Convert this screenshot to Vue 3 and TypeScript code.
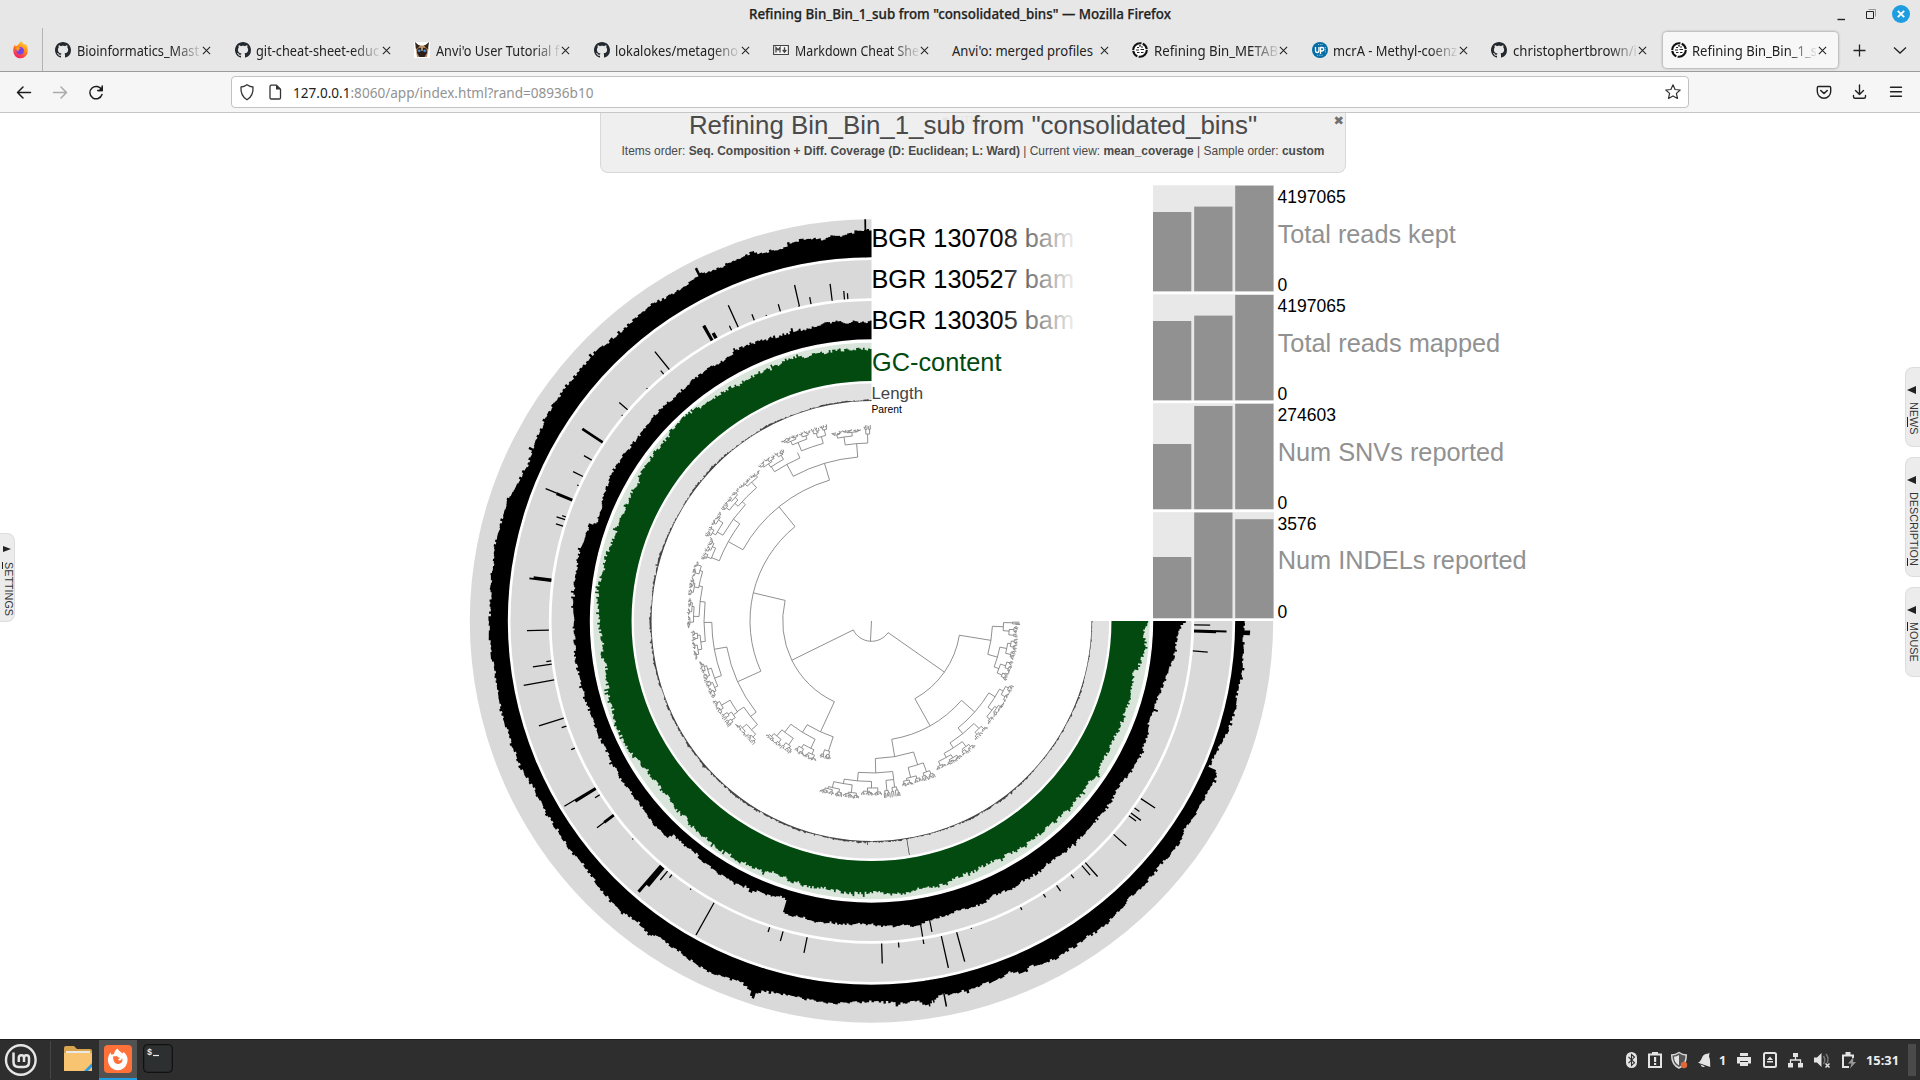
<script setup lang="ts">
interface Tab { icon: string; label: string; width: number; active?: boolean }
interface TreeNode { r: number; a: number; kids?: TreeNode[]; span?: [number, number, number] }
type Point = [number, number]

const tabs: Tab[] = [
  { icon: 'github', label: 'Bioinformatics_Mast', width: 122 },
  { icon: 'github', label: 'git-cheat-sheet-educ', width: 123 },
  { icon: 'cat', label: "Anvi'o User Tutorial f", width: 123 },
  { icon: 'github', label: 'lokalokes/metageno', width: 123 },
  { icon: 'markdown', label: 'Markdown Cheat She', width: 124 },
  { icon: '', label: "Anvi'o: merged profiles", width: 141 },
  { icon: 'anvio', label: 'Refining Bin_METAB', width: 124 },
  { icon: 'uniprot', label: 'mcrA - Methyl-coenz', width: 124 },
  { icon: 'github', label: 'christophertbrown/i', width: 124 },
  { icon: 'anvio', label: 'Refining Bin_Bin_1_s', width: 125, active: true },
]

const CX = 871.5
const CY = 621

let seed = 20417
function rand(): number {
  seed = (seed + 0x6d2b79f5) | 0
  let t = Math.imul(seed ^ (seed >>> 15), 1 | seed)
  t = (t + Math.imul(t ^ (t >>> 7), 61 | t)) ^ t
  return ((t ^ (t >>> 14)) >>> 0) / 4294967296
}

function pt(r: number, deg: number): string {
  const t = (deg * Math.PI) / 180
  return `${(CX + r * Math.cos(t)).toFixed(2)} ${(CY + r * Math.sin(t)).toFixed(2)}`
}

function ring(r0: number, r1: number): string {
  return `M${pt(r0, 0)}L${pt(r1, 0)}A${r1} ${r1} 0 1 1 ${pt(r1, 270)}L${pt(r0, 270)}A${r0} ${r0} 0 1 0 ${pt(r0, 0)}Z`
}

function heightAt(points: Point[], a: number): number {
  for (let i = 1; i < points.length; i++) {
    if (a <= points[i][0]) {
      const [a0, h0] = points[i - 1]
      const [a1, h1] = points[i]
      return h0 + ((h1 - h0) * (a - a0)) / Math.max(0.001, a1 - a0)
    }
  }
  return points[points.length - 1][1]
}

function profile(r0: number, points: Point[], jitter: number, max = 38): string {
  const step = 0.36
  let drift = 0
  let d = `M${pt(r0, 0)}`
  for (let a = 0; a < 270; a += step) {
    drift = drift * 0.86 + (rand() - 0.5) * jitter * 0.7
    const spike = rand() > 0.93 ? jitter * 1.2 * rand() : 0
    const h = Math.min(max, Math.max(0.6, heightAt(points, a + step / 2) + drift + (rand() - 0.5) * jitter * 1.1 + spike))
    d += `L${pt(r0 + h, a)}L${pt(r0 + h, Math.min(270, a + step))}`
  }
  return `${d}L${pt(r0, 270)}A${r0} ${r0} 0 1 0 ${pt(r0, 0)}Z`
}

function spikes(r0: number, list: number[][]): string {
  return list.map(([a, h, w = 0.22]) =>
    `M${pt(r0, a - w / 2)}L${pt(r0 + h, a - w / 2)}L${pt(r0 + h, a + w / 2)}L${pt(r0, a + w / 2)}Z`).join('')
}

const outerPoints: Point[] = [
  [0, 9], [1.3, 9], [1.5, 14], [2.1, 14], [2.3, 8], [6, 10], [13, 11], [17, 8], [22, 5], [23.3, 6], [23.8, 16], [26.5, 14], [32.4, 13.5], [41, 15],
  [50, 18], [58, 19], [61.8, 21], [65, 17], [67, 20], [68, 15], [71.8, 16], [79, 16], [80, 18], [81.8, 24], [83, 19], [86.7, 18.5], [91.7, 17.5],
  [95, 20], [101.8, 20], [106, 20], [107, 25], [107.5, 30], [108.2, 23], [110, 18], [116.8, 23.5], [123.8, 16], [125, 21], [128, 17], [132.8, 20],
  [140, 12], [142, 15], [148, 14], [155, 14], [160.7, 17], [167, 15.5], [174, 17], [180, 17], [189, 19.5], [195, 20.5], [199, 17.5], [204.6, 15],
  [213, 21], [221.3, 21], [227, 19.5], [234.4, 21], [240, 19], [243.2, 21], [243.6, 30], [244, 23], [246, 21], [249.6, 22], [257, 19], [257.4, 23],
  [263.5, 22], [266, 23], [268, 27], [270, 28],
]
const midPoints: Point[] = [
  [0, 32], [0.5, 30], [0.8, 27], [4.8, 23], [12, 17], [17, 15], [17.5, 18], [18, 12], [20, 12], [24, 18], [27.5, 19], [33.7, 17], [39.9, 19],
  [46.8, 18], [55.4, 20], [60.5, 20], [66.7, 18], [68.4, 22], [76.3, 22], [81, 26], [86, 23], [92, 22], [95.4, 22], [101, 23], [106.9, 23],
  [107, 9], [116.5, 13], [126, 11], [132.8, 10], [133.5, 16], [141, 15], [149.4, 14], [158.4, 13], [164.6, 15], [172.5, 16], [180, 15],
  [191.8, 17], [199, 17], [199.6, 10], [205.5, 15], [210, 16], [217.5, 15.5], [226, 16.5], [234.4, 18], [242.8, 18], [243, 24], [244, 19],
  [247, 20], [256.8, 18], [262, 19], [269, 16.5], [270, 20],
]
const gcPoints: Point[] = [
  [0, 37], [0.5, 36], [0.7, 32], [5.4, 33], [10.3, 33], [11, 28], [18.5, 30], [24.6, 29], [30, 31], [35.6, 33], [41, 32], [44.8, 32.5],
  [49.8, 31], [56, 32], [63, 29.5], [71, 30.5], [76, 34], [78, 31], [85, 33], [92, 33], [97, 34], [103, 32.5], [111.8, 32], [118.8, 33],
  [128, 33], [136.8, 31], [143.5, 28], [151, 34], [158, 34.5], [166, 32.5], [174.5, 30], [186, 34], [193, 34.5], [200, 31.5], [206.5, 31],
  [216.8, 34], [227.5, 36], [236.5, 33], [242, 30], [248.2, 29.5], [248.5, 34], [256, 33], [264, 33], [269, 31], [270, 32],
]
const lengthPoints: Point[] = [[0, 1], [80, 1], [92, 1.4], [170, 1.2], [190, 1.5], [220, 1.2], [270, 1.2]]

const outerPath = profile(363.7, outerPoints, 2.2)
const midPath = profile(281.7, midPoints, 2)
const gcPath = profile(240, gcPoints, 2.8)
const lengthPath = profile(220, lengthPoints, 1, 4)
const outerSpikes = spikes(363.7, [[269.1, 38, 0.25], [81.4, 26], [80.7, 23], [79, 29]])
const midSpikes = spikes(281.7, [[80.8, 38], [79, 35]])
const lengthSpikes = spikes(220, [[80.8, 17, 0.18], [91, 4], [60, 2]])
const thinSpikes = spikes(322.7, [
  [0.7, 16], [1.7, 32.5, 0.35], [1.9, 22, 0.3], [5.3, 15], [33.4, 17], [35.4, 6], [36.5, 12.5], [37.1, 9], [41.4, 17], [48.5, 18.5], [49.3, 12.5],
  [51.8, 4.5], [55, 7], [57.8, 4], [62.5, 3], [72, 1], [74.7, 30.5], [77.5, 32.5], [80.8, 4.5], [85.2, 5], [88.2, 20], [101.5, 16], [105.9, 10],
  [108.4, 5], [119.2, 37], [124, 1.5], [128.2, 4], [129.2, 11.5], [130.7, 34.5, 0.5], [130.3, 24, 0.8], [137.6, 1.2], [143, 21], [143, 12, 0.5],
  [147.4, 5.5], [148.9, 36], [148.7, 24, 0.5], [156.8, 4], [161, 5], [162.5, 26], [169.5, 31], [172.3, 19], [172.9, 5], [178.4, 22],
  [187.1, 22, 0.3], [187.3, 18, 0.5], [197.1, 7.5], [198.3, 9], [198.8, 4], [202.1, 29], [202, 17, 0.5], [204.8, 1.5], [206.6, 11], [209.9, 9],
  [213.6, 24.5, 0.45], [219.5, 1], [220.9, 11], [226, 1], [229.9, 4.5], [231.2, 23], [240.4, 17, 0.55], [241.2, 6, 0.6], [244.3, 5], [245.6, 24],
  [248.7, 6.5], [251, 1], [253.6, 7.5], [257, 1], [257.1, 22], [259.2, 7], [263, 17], [265.2, 8.5], [265.8, 6],
])

const tree: TreeNode = {
  r: 20.3, a: 91, kids: [
    { r: 89, a: 35, kids: [
      { r: 121, a: 9.2, kids: [
        { r: 132, a: 2.5, kids: [{ r: 141, a: 0.7, span: [0.2, 1.6, 148] }, { r: 138, a: 4.2, span: [2, 6.5, 146] }] },
        { r: 131, a: 16, kids: [{ r: 138, a: 11.5, span: [7, 15.5, 147] }, { r: 136, a: 20.5, span: [16, 24, 147] }] },
      ] },
      { r: 120, a: 60.8, kids: [
        { r: 137.6, a: 41.4, kids: [
          { r: 145, a: 31.5, span: [24.5, 41.5, 156] },
          { r: 145, a: 51, kids: [{ r: 152, a: 45, span: [42.5, 49, 158] }, { r: 151, a: 57.2, span: [50, 66.5, 163] }] },
        ] },
        { r: 137.6, a: 80.3, kids: [
          { r: 151, a: 72.2, span: [67.5, 79.5, 168] },
          { r: 152, a: 88.4, kids: [
            { r: 160, a: 82, span: [80.5, 86, 177] },
            { r: 160.5, a: 95, kids: [{ r: 167, a: 90, span: [86.5, 93.5, 174] }, { r: 165, a: 99.8, span: [94, 107, 178] }] },
          ] },
        ] },
      ] },
    ] },
    { r: 88.8, a: 153.8, kids: [
      { r: 122, a: 114.7, kids: [
        { r: 137, a: 108.3, span: [106.5, 111, 145] },
        { r: 131, a: 121.8, kids: [{ r: 141, a: 115.5, span: [111.5, 121, 151] }, { r: 141, a: 128, span: [121.5, 133, 156] }] },
      ] },
      { r: 121.5, a: 193.4, kids: [
        { r: 147, a: 155.6, kids: [
          { r: 154, a: 141.7, kids: [{ r: 162, a: 137.8, span: [133.5, 143, 171] }, { r: 162, a: 146, span: [143.5, 153.3, 178] }] },
          { r: 159.7, a: 169.8, kids: [
            { r: 167, a: 160, span: [154, 167, 177] },
            { r: 167.5, a: 179.5, kids: [
              { r: 172, a: 173, span: [167.5, 177, 180] },
              { r: 172.5, a: 186.5, kids: [{ r: 178, a: 181.5, span: [177.5, 187.5, 184] }, { r: 176, a: 191.5, span: [188, 199, 185] }] },
            ] },
          ] },
        ] },
        { r: 147, a: 231, kids: [
          { r: 163.7, a: 209, kids: [
            { r: 172, a: 201.6, span: [200, 207.5, 181] },
            { r: 171.6, a: 216.4, kids: [{ r: 178, a: 210, span: [207, 216, 187] }, { r: 176, a: 222.7, span: [216.5, 233.5, 188] }] },
          ] },
          { r: 164.5, a: 253.4, kids: [
            { r: 178, a: 241.6, kids: [{ r: 184, a: 237, span: [233.7, 243, 193] }, { r: 184, a: 246.3, span: [243, 257.3, 201] }] },
            { r: 178, a: 265.2, kids: [{ r: 186, a: 261.5, span: [257.8, 267, 192] }, { r: 187, a: 268.8, span: [267.6, 269.9, 195] }] },
          ] },
        ] },
      ] },
    ] },
  ],
}

const LEAF = 0.72
function grow(r: number, from: number, to: number, leafR: number, out: string[]): void {
  const width = to - from
  const cut = from + width * (0.34 + rand() * 0.32)
  const lo = (from + cut) / 2
  const hi = (cut + to) / 2
  out.push(`M${pt(r, lo)}A${r} ${r} 0 0 1 ${pt(r, hi)}`)
  for (const [f, t, m] of [[from, cut, lo], [cut, to, hi]]) {
    const leaf = t - f < LEAF
    const next = leaf ? leafR - 1 + rand() * 2 : r + (leafR - r) * (0.3 + rand() * 0.35)
    out.push(`M${pt(r, m)}L${pt(next, m)}`)
    if (!leaf) grow(Number(next.toFixed(2)), f, t, leafR, out)
  }
}

function draw(node: TreeNode, out: string[]): void {
  if (node.span) {
    grow(node.r, node.span[0], node.span[1], node.span[2], out)
    return
  }
  const kids = node.kids ?? []
  const angles = kids.map((k) => k.a)
  out.push(`M${pt(node.r, Math.min(...angles))}A${node.r} ${node.r} 0 0 1 ${pt(node.r, Math.max(...angles))}`)
  for (const kid of kids) {
    out.push(`M${pt(node.r, kid.a)}L${pt(kid.r, kid.a)}`)
    draw(kid, out)
  }
}

const branches: string[] = [`M${CX} ${CY}L${pt(20.3, 93)}`]
draw(tree, branches)
const treePath = branches.join('')

const backgrounds = [
  { d: ring(220, 237.6), fill: '#e1e1e1' },
  { d: ring(240, 278.3), fill: '#d9e5db' },
  { d: ring(281.7, 320), fill: '#d9d9d9' },
  { d: ring(322.7, 361), fill: '#d9d9d9' },
  { d: ring(363.7, 401.7), fill: '#d9d9d9' },
]

const samples = [
  { y: 185.3, label: 'Total reads kept', max: '4197065', tops: [212, 206.6, 185.6], ty: 242.7, w: 178 },
  { y: 294.3, label: 'Total reads mapped', max: '4197065', tops: [321, 315.6, 294.9], ty: 351.7, w: 222.5 },
  { y: 403.2, label: 'Num SNVs reported', max: '274603', tops: [444, 406, 403.8], ty: 460.7, w: 226.5 },
  { y: 512.2, label: 'Num INDELs reported', max: '3576', tops: [557, 512.5, 519.2], ty: 569, w: 249 },
]
const barX = [1153, 1194.2, 1235.2]
const bamRows = [
  { y: 246.7, text: 'BGR 130708 bam' },
  { y: 288, text: 'BGR 130527 bam' },
  { y: 328.7, text: 'BGR 130305 bam' },
]
const drawers = [
  { cls: 'news', pre: 'NE', key: 'W', post: 'S' },
  { cls: 'description', pre: 'DESCRIPTIO', key: 'N', post: '' },
  { cls: 'mouse', pre: '', key: 'M', post: 'OUSE' },
]
</script>

<template>
  <div class="screen">
    <header class="titlebar">
      <svg class="title-text" width="424" height="28"><text x="1" y="19" textLength="422" lengthAdjust="spacingAndGlyphs">Refining Bin_Bin_1_sub from "consolidated_bins" — Mozilla Firefox</text></svg>
      <svg class="window-buttons" width="90" height="28" viewBox="1830 0 90 28">
        <path d="M1837.500 19.500h7.500" stroke="#222" stroke-width="1.400" />
        <path d="M1866.500 11.500h7v7h-7z" fill="none" stroke="#222" /><path d="M1868.500 9.500h7v7" fill="none" stroke="#999" />
        <circle cx="1901" cy="14" r="9" fill="#1e9ee0" /><path d="M1897.800 10.800l6.400 6.400m0-6.400l-6.400 6.400" stroke="#fff" stroke-width="1.800" />
      </svg>
    </header>

    <nav class="tabstrip">
      <div class="pinned">
        <svg width="17" height="18" viewBox="0 0 18 20">
          <defs><linearGradient id="fx" x1=".8" y1="0" x2=".3" y2="1"><stop offset="0" stop-color="#ffe14a" /><stop offset=".45" stop-color="#ff8a16" /><stop offset="1" stop-color="#f5156c" /></linearGradient></defs>
          <path d="M10.500 0c.3 2 2 3 3 4l1-1c2 2 3 5 2.500 8a8 8 0 0 1-16 .5C.8 8 1.600 5.500 3 4l.3 2L6 4.700C7 3 8.500 1 10.500 0z" fill="url(#fx)" />
          <circle cx="8.600" cy="10.800" r="4.100" fill="#7542e5" /><path d="M4 7l3-.6 2 1.700-2 1.500-.4 2C5 11.500 4 9 4 7z" fill="#ff9a1c" />
        </svg>
      </div>
      <div v-for="(tab, i) in tabs" :key="i" class="tab" :class="{ active: tab.active, plain: !tab.icon }">
        <svg v-if="tab.icon === 'github'" class="favicon" viewBox="0 0 16 16"><path fill="#24292f" d="M8 0C3.580 0 0 3.580 0 8c0 3.540 2.290 6.530 5.470 7.590.4.070.55-.17.55-.38 0-.19-.01-.82-.01-1.490-2.010.37-2.530-.49-2.690-.94-.09-.23-.48-.94-.82-1.130-.28-.15-.68-.52-.01-.53.63-.01 1.080.58 1.230.82.720 1.210 1.870.87 2.330.66.070-.52.28-.87.51-1.070-1.780-.2-3.640-.89-3.640-3.950 0-.87.31-1.590.82-2.150-.08-.2-.36-1.020.08-2.120 0 0 .67-.21 2.200.82.640-.18 1.320-.27 2-.27s1.360.09 2 .27c1.530-1.040 2.200-.82 2.200-.82.440 1.100.16 1.920.08 2.120.51.560.82 1.270.82 2.150 0 3.070-1.870 3.750-3.650 3.950.29.250.54.730.54 1.480 0 1.070-.01 1.930-.01 2.200 0 .21.15.46.55.38A8.010 8.010 0 0 0 16 8c0-4.420-3.580-8-8-8z" /></svg>
        <svg v-else-if="tab.icon === 'cat'" class="favicon" viewBox="0 0 16 16"><path fill="#fff" d="M0 0h16v16H0z" /><path fill="#b98d62" d="M1.500 4.500L3 3.500h10l1.500 3L13 15H3z" /><path fill="#33261f" d="M1 0l3.500 3H6L4.500 5.500 2 7zM15 0l-3.500 3H10l1.500 2.500L14 7z" /><path fill="#2b201c" d="M3.500 6.500L8 5.500l4.500 1L13 11l-2.500 4h-5L3 11z" /><path fill="#c9a078" d="M7 5h2l-.3 4H7.300z" /><circle cx="5.300" cy="8.800" r="1.300" fill="#3b97e4" /><circle cx="10.700" cy="8.800" r="1.300" fill="#3b97e4" /></svg>
        <svg v-else-if="tab.icon === 'markdown'" class="favicon" viewBox="0 0 16 16"><path d="M.6 3.500h14.800v9H.6z" fill="#f4f4f4" stroke="#444" stroke-width="1.100" /><path d="M3 10.500v-5l2 2.500 2-2.500v5M11.500 5.300v4.500M9.700 8l1.800 2.200L13.300 8" fill="none" stroke="#444" stroke-width="1.300" /></svg>
        <svg v-else-if="tab.icon === 'anvio'" class="favicon" viewBox="0 0 16 16"><circle cx="8" cy="8" r="6.800" fill="#fff" stroke="#111" stroke-width="2.100" stroke-dasharray="12 1.300 7 1" /><path d="M5 5.500h2M9 5h2M4 8h3M8.500 7.500H12M5 10.500h2.500M9 10.500h2.500M7 3.800h2" stroke="#222" stroke-width="1.200" /></svg>
        <svg v-else-if="tab.icon === 'uniprot'" class="favicon" viewBox="0 0 16 16"><circle cx="8" cy="8" r="8" fill="#056da5" /><path d="M3.500 5v3.500q0 2 1.700 2t1.700-2V5M8.500 12V5.500H10q1.800 0 1.800 1.700T10 9H8.500" fill="none" stroke="#fff" stroke-width="1.300" /><path d="M13.300 5v6M5 13.200h6M6 2.500h5" stroke="#9cc9e4" stroke-width="1.100" stroke-dasharray="1.200 1" /></svg>
        <svg class="tab-label" :class="{ full: !tab.icon }" height="24"><text x="0" y="17.500" :textLength="tab.width" lengthAdjust="spacingAndGlyphs">{{ tab.label }}</text></svg>
        <svg class="tab-close" viewBox="0 0 10 10"><path d="M1 1l8 8M9 1L1 9" stroke="#222" stroke-width="1.150" /></svg>
      </div>
      <svg class="tab-tools" width="80" height="43" viewBox="1840 28 80 43"><path d="M1859.500 44.500v12M1853.500 50.500h12M1894 47.500l6 5.500 6-5.500" fill="none" stroke="#222" stroke-width="1.300" /></svg>
    </nav>

    <div class="toolbar">
      <svg class="nav-icons" width="231" height="40" viewBox="0 72 231 40">
        <g fill="none" stroke-width="1.500" stroke-linecap="round" stroke-linejoin="round">
          <path d="M30.500 92.500h-13m5.500-5.500l-5.500 5.500 5.500 5.500" stroke="#1c1c1c" /><path d="M53.500 92.500h13M61 87l5.500 5.500L61 98" stroke="#aaa" />
          <path d="M101.700 90a6.200 6.200 0 1 0 .3 4.500M102.200 86v4.500h-4.500" stroke="#1c1c1c" />
        </g><path d="M102.900 86v5.200h-5.200z" fill="#1c1c1c" />
      </svg>
      <div class="urlbar">
        <svg class="site-icons" width="50" height="30" viewBox="236 77 50 30"><g fill="none" stroke="#333" stroke-width="1.300" stroke-linejoin="round"><path d="M247 84.700q3 2.300 6 2.300c.5 6-1.500 10-6 12.800-4.500-2.800-6.500-6.800-6-12.800q3 0 6-2.300z" /><path d="M270 86.500q0-1.300 1.300-1.300h5.200l4 4v8.500q0 1.300-1.300 1.300h-7.900q-1.300 0-1.300-1.300z" /></g><path d="M276 85v4.600h4.600z" fill="#333" /></svg>
        <svg class="url-text" width="320" height="30"><text x="7" y="21" textLength="300.500" lengthAdjust="spacingAndGlyphs"><tspan fill="#222">127.0.0.1</tspan><tspan fill="#929292">:8060/app/index.html?rand=08936b10</tspan></text></svg>
        <svg class="star" width="18" height="18" viewBox="0 0 18 18"><path d="M9 1.800l2.100 4.700 5.100.5-3.800 3.400 1.100 5.100L9 12.900l-4.500 2.600 1.100-5.100L1.800 7l5.100-.5z" fill="none" stroke="#333" stroke-width="1.200" stroke-linejoin="round" /></svg>
      </div>
      <svg class="tool-icons" width="120" height="40" viewBox="1800 72 120 40">
        <g fill="none" stroke="#222" stroke-width="1.400" stroke-linecap="round" stroke-linejoin="round">
          <path d="M1818.500 86.500h11q1.200 0 1.200 1.200v3.800a6.700 6.700 0 0 1-13.400 0v-3.800q0-1.200 1.200-1.200z" /><path d="M1820.800 90.500l3.200 3 3.200-3" stroke-width="1.600" />
          <path d="M1859.500 85v9.500m-4-4l4 4 4-4M1853.500 95.500v1.200q0 1.500 1.500 1.500h9q1.500 0 1.500-1.500v-1.200M1890.500 87.300h11M1890.500 91.700h11M1890.500 96.200h11" />
        </g>
      </svg>
    </div>

    <main class="page">
      <svg class="chart" width="1920" height="926" viewBox="0 113 1920 926">
        <defs>
          <linearGradient id="fade" gradientUnits="userSpaceOnUse" x1="998" y1="0" x2="1080" y2="0"><stop offset="0" stop-color="#000" /><stop offset=".3" stop-color="#606060" /><stop offset="1" stop-color="#fff" /></linearGradient>
        </defs>
        <path v-for="(b, i) in backgrounds" :key="i" :d="b.d" :fill="b.fill" />
        <path :d="outerPath" /><path :d="outerSpikes" /><path :d="thinSpikes" /><path :d="midPath" /><path :d="midSpikes" />
        <path :d="gcPath" fill="#024a10" />
        <path :d="lengthPath" fill="#444" /><path :d="lengthSpikes" fill="#444" />
        <path :d="treePath" fill="none" stroke="#7c7c7c" stroke-width=".85" />
        <g class="layer-names">
          <text v-for="row in bamRows" :key="row.y" x="871.500" :y="row.y" textLength="202.500" lengthAdjust="spacingAndGlyphs" font-size="25.200" fill="url(#fade)">{{ row.text }}</text>
          <text x="872" y="370.500" textLength="129.500" lengthAdjust="spacingAndGlyphs" font-size="25.200" fill="#024a10">GC-content</text>
          <text x="871.500" y="399" font-size="16.500" fill="#444" textLength="51.500" lengthAdjust="spacingAndGlyphs">Length</text>
          <text x="871.500" y="412.500" font-size="10.300">Parent</text>
        </g>
        <g v-for="s in samples" :key="s.label">
          <rect x="1153" :y="s.y" width="121" height="106.300" fill="#e8e8e8" />
          <rect v-for="(top, i) in s.tops" :key="i" :x="barX[i]" :y="top" width="38.300" :height="s.y + 106 - top" fill="#919191" />
          <text x="1277.500" :y="s.y + 17.500" font-size="17.500">{{ s.max }}</text>
          <text x="1277.700" :y="s.ty" font-size="25" fill="#919191" :textLength="s.w" lengthAdjust="spacingAndGlyphs">{{ s.label }}</text>
          <text x="1277.500" :y="s.y + 105.500" font-size="17.500">0</text>
        </g>
      </svg>

      <section class="panel">
        <span class="ghost">▼ TITLE</span>
        <h1>Refining Bin_Bin_1_sub from "consolidated_bins"</h1>
        <p>Items order: <b>Seq. Composition + Diff. Coverage (D: Euclidean; L: Ward)</b> | Current view: <b>mean_coverage</b> | Sample order: <b>custom</b></p>
        <span class="panel-close">✖</span>
      </section>

      <aside class="drawer settings"><i class="arrow right"></i><span><u>S</u>ETTINGS</span></aside>
      <aside v-for="d in drawers" :key="d.cls" class="drawer" :class="d.cls"><i class="arrow left"></i><span>{{ d.pre }}<u>{{ d.key }}</u>{{ d.post }}</span></aside>
    </main>

    <footer class="taskbar">
      <svg width="200" height="41" viewBox="0 1039 200 41">
        <circle cx="20.800" cy="1060" r="14.800" fill="none" stroke="#e6e6e6" stroke-width="2.400" />
        <path d="M13.500 1052.500v9.500q0 5 5 5h5.500q5 0 5-5v-4q0-2.700-2.500-2.700t-2.500 2.700v4m0-4q0-2.700-2.600-2.700t-2.600 2.700v4" fill="none" stroke="#e6e6e6" stroke-width="2.500" />
        <path d="M50.500 1041v38" stroke="#454545" />
        <path d="M64 1048q0-2 2-2h8l3 3h13q2 0 2 2v7H64z" fill="#d9a54c" /><path d="M66 1051h24v5H66z" fill="#e9e9e9" /><path d="M64 1053h28v18H64z" fill="#f8c471" /><path d="M92 1063v4l-4 4h-4z" fill="#2a9be0" />
        <path d="M99 1040h38v40H99z" fill="#525252" /><path d="M99 1078h38v2H99z" fill="#1e9ee0" />
        <rect x="104" y="1045" width="28" height="28" rx="4" fill="#ff7139" />
        <path d="M117.500 1048.500c1 2.500 3.500 3 4.800 5l1.200-1.500c3.500 2.700 4.800 6.500 3.700 10.500a9.700 9.700 0 0 1-18.900.3c-1-3.800 0-7.800 2.200-10.300l.8 2.300 2.700-.8c.5-2.300 1.700-4.200 3.500-5.500z" fill="#fff" /><path d="M113 1056.500l3.800-.5 1.700 1.500 1.500.2-2 2c1.500 1.500 3.800.6 4-1.600 1.400 2.500-.2 5.900-3.700 5.900-3.200 0-5.200-2.500-5.300-7.500z" fill="#ff7139" />
        <rect x="143.500" y="1044.500" width="29" height="28" rx="4" fill="#262626" stroke="#111" /><rect x="145" y="1046" width="26" height="25" rx="2.500" fill="#2d3030" />
        <text x="147" y="1055" font-family="Liberation Mono" font-size="8.500" font-weight="700" fill="#eee">$</text><path d="M153 1055.500h6" stroke="#eee" stroke-width="1.200" />
      </svg>
      <svg width="320" height="41" viewBox="1600 1039 320 41">
        <rect x="1626" y="1052" width="11" height="16" rx="5.500" fill="#e4e4e4" /><path d="M1628.500 1056.800l6 6-3 2.700v-11l3 2.600-6 6" fill="none" stroke="#2e2e2e" stroke-width="1.100" />
        <path d="M1649 1054.500h12v12.500h-12z" fill="none" stroke="#e4e4e4" stroke-width="2" /><path d="M1652 1052h6v3h-6zM1654 1057h2.200v5h-2.200zM1654 1063h2.200v2h-2.200z" fill="#e4e4e4" />
        <path d="M1679 1052.500q3.500 2.500 7.300 2.500c0 6-1.800 10.500-7.300 13-5.500-2.500-7.300-7-7.300-13q3.800 0 7.300-2.500z" fill="#555" stroke="#d8d8d8" stroke-width="1.500" /><path d="M1679 1055v10.500c-3.500-2-5-5-5-8.700q2.500-.2 5-1.800z" fill="#e4e4e4" /><circle cx="1684" cy="1065" r="3.200" fill="#e0693a" />
        <path d="M1709.500 1052.500l-.5 4c1.500 3 1 6.500 1.300 10.500l-12.300-4.300c3-1.500 3.500-4 4.500-6.200 1.500-2.500 4-3.200 5.500-2.700zM1700.500 1064.500l4.500 1.700q-3 2.300-4.500-1.700z" fill="#e4e4e4" />
        <text x="1719" y="1065" font-size="12.500" font-weight="700" fill="#eee" class="clock">1</text>
        <path d="M1740 1053h8v3h-8zM1737 1057h14v6.500h-3v-2.500h-8v2.500h-3zM1740 1062h8v4h-8z" fill="#e4e4e4" />
        <rect x="1764" y="1053" width="12" height="14" rx="1.500" fill="none" stroke="#e4e4e4" stroke-width="2" /><path d="M1767 1060l3-3.500 3 3.500zM1767 1061h6v1.400h-6z" fill="#e4e4e4" />
        <path d="M1793 1053h5v4h-5zM1788 1063h5v4.500h-5zM1798 1063h5v4.500h-5z" fill="#e4e4e4" /><path d="M1795.500 1056v4m-5 3v-3h10v3" fill="none" stroke="#e4e4e4" stroke-width="1.300" />
        <path d="M1814 1057.500h3l4.500-4.500v14l-4.500-4.500h-3z" fill="#e4e4e4" /><path d="M1823.500 1056q2.500 4 0 8M1826 1054q3.500 4.500 1 9" fill="none" stroke="#777" stroke-width="1.500" /><path d="M1825.500 1063.500l4 4m0-4l-4 4" stroke="#e4e4e4" stroke-width="1.500" />
        <path d="M1849 1067h-6v-11.500h10v2.500" fill="none" stroke="#e4e4e4" stroke-width="2" /><path d="M1845.500 1052h5v3h-5z" fill="#e4e4e4" /><path d="M1853.500 1057l-5.500 6.500h3.500l-1.500 5 6-6.500h-3z" fill="#999" />
        <text x="1866" y="1065" font-size="12.500" font-weight="700" fill="#eee" class="clock" textLength="33" lengthAdjust="spacingAndGlyphs">15:31</text>
        <path d="M1908 1044h8v32h-8z" fill="#4a4a4a" />
      </svg>
    </footer>
  </div>
</template>

<style>
body { margin: 0; overflow: hidden; background: #fff; }
</style>

<style scoped>
.screen { width: 1920px; height: 1080px; display: flex; flex-direction: column; overflow: hidden; background: #fff; font-family: "Liberation Sans", Arial, sans-serif; }
svg { display: block; flex: none; }
.titlebar { position: relative; height: 28px; flex: none; display: flex; justify-content: center; background: #e7e7e7; }
.title-text { overflow: visible; }
.title-text text { font: 500 14px "Noto Sans", sans-serif; fill: #222; stroke: #222; stroke-width: .25px; }
.window-buttons { position: absolute; right: 0; top: 0; }
.tabstrip { height: 43px; flex: none; display: flex; background: #e7e7e7; border-bottom: 1px solid #9c9c9c; }
.pinned { width: 43px; border-right: 1px solid #b3b3b3; margin-right: 2px; display: flex; align-items: center; justify-content: center; box-sizing: border-box; padding-right: 2px; }
.tab { width: 175.500px; height: 36px; margin: 4px 2px; padding-left: 8px; box-sizing: border-box; border-radius: 4px; display: flex; align-items: center; flex: none; }
.tab.active { background: #f7f7f7; box-shadow: 0 0 3px rgba(0, 0, 0, .45); }
.tab.plain { padding-left: 7.500px; }
.favicon { width: 16px; height: 16px; margin-right: 5.500px; }
.tab-label { width: 124px; overflow: visible; -webkit-mask-image: linear-gradient(90deg, #000 78%, transparent 102%); mask-image: linear-gradient(90deg, #000 78%, transparent 102%); }
.tab-label.full { width: 146px; -webkit-mask-image: none; mask-image: none; }
.tab-label text { font: 14px "Noto Sans", sans-serif; fill: #222; }
.tab-close { width: 9px; height: 9px; margin-left: 1.500px; }
.tab-tools { margin-left: auto; }
.toolbar { height: 40px; flex: none; display: flex; align-items: center; background: #f6f6f6; border-bottom: 1px solid #c6c6c6; }
.urlbar { width: 1458px; height: 32px; box-sizing: border-box; border: 1px solid #c2c2c2; border-radius: 4px; background: #fff; display: flex; align-items: center; padding-left: 4px; }
.url-text text { font: 14.500px "Noto Sans", sans-serif; }
.star { margin-left: auto; margin-right: 6px; }
.tool-icons { margin-left: auto; }
.page { position: relative; height: 926px; flex: none; overflow: hidden; }
.panel { position: absolute; top: 0; left: 600px; width: 746px; height: 60px; box-sizing: border-box; background: #efefef; border: 1px solid #d8d8d8; border-top: 0; border-radius: 0 0 8px 8px; text-align: center; color: #4a4a4a; white-space: nowrap; }
.panel h1 { margin: -3px 0 0; font-size: 25.900px; line-height: 30px; font-weight: 400; position: relative; }
.panel p { margin: 3px 0 0; font-size: 11.960px; line-height: 16px; }
.ghost { position: absolute; top: 1px; left: 339px; font-size: 11px; color: #e4e4e4; }
.panel-close { position: absolute; right: 1px; top: 0; font: 12.500px "DejaVu Sans", sans-serif; color: #707070; }
.drawer { position: absolute; right: 0; width: 15px; box-sizing: border-box; background: #ececec; border: 1px solid #ddd; border-right: 0; border-radius: 8px 0 0 8px; color: #333; font-size: 10.800px; }
.drawer span { position: absolute; left: 1px; writing-mode: vertical-rl; line-height: 14px; }
.drawer u { text-decoration: none; box-shadow: -1px 0 0 #222; }
.arrow { position: absolute; width: 0; height: 0; border: solid transparent; }
.arrow.left { left: 1px; top: 18px; border-width: 4.500px 9px 4.500px 0; border-right-color: #222; }
.arrow.right { left: 3px; top: 12px; border-width: 3px 0 3px 8px; border-left-color: #222; }
.settings { left: 0; top: 419.500px; height: 89px; border-radius: 0 8px 8px 0; border: 1px solid #ddd; border-left: 0; }
.settings span { top: 28px; left: 2px; }
.news { top: 254px; height: 80px; }
.news span { top: 33.500px; }
.description { top: 344px; height: 120px; }
.description span { top: 34px; }
.mouse { top: 474px; height: 90px; }
.mouse span { top: 34px; }
.taskbar { height: 41px; flex: none; background: #2e2e2e; display: flex; justify-content: space-between; box-shadow: inset 0 1px #1e1e1e; }
.clock { font-family: "Noto Sans", sans-serif; }
</style>
